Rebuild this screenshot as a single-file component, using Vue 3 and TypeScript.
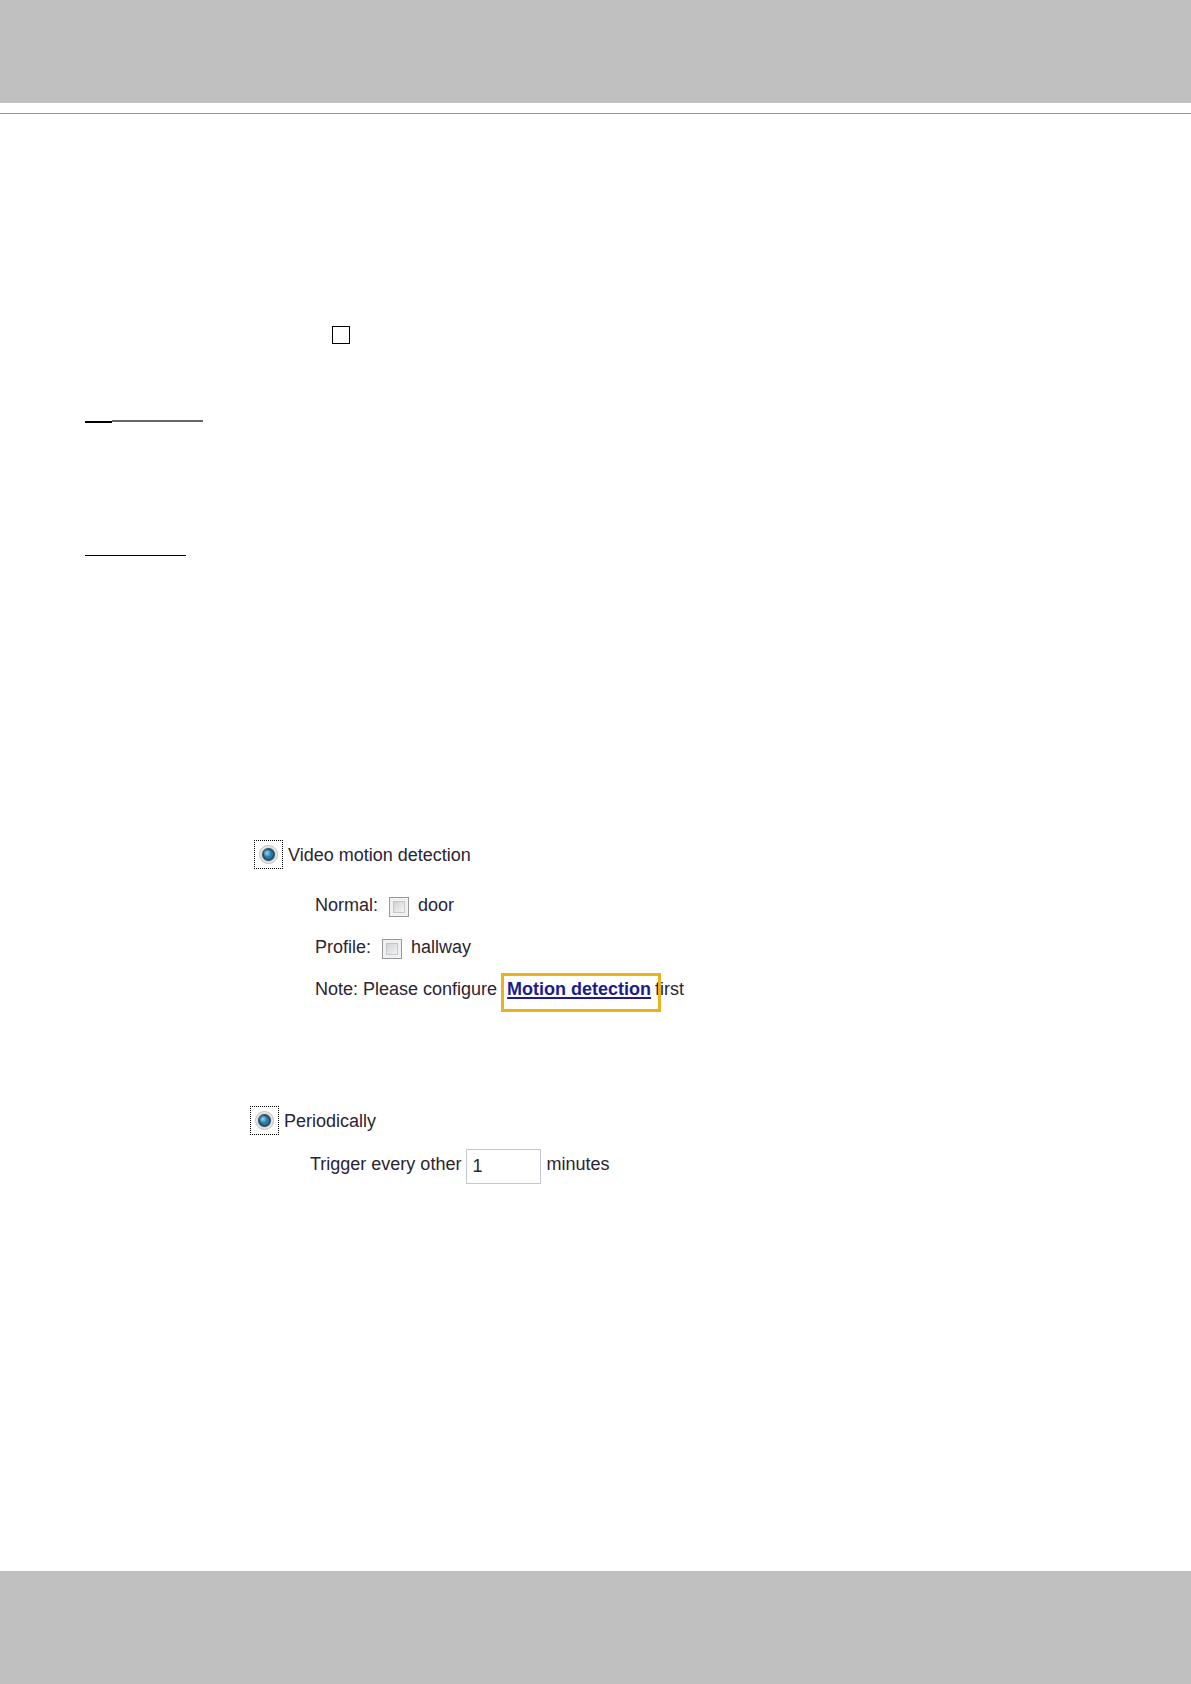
<script setup lang="ts">
import { ref } from 'vue'

interface MotionWindow {
  id: string
  kind: string
  name: string
}

const windows: MotionWindow[] = [
  { id: 'win-door', kind: 'Normal:', name: 'door' },
  { id: 'win-hallway', kind: 'Profile:', name: 'hallway' },
]
const selected = ref<string[]>([])
const motionTrigger = ref('motion')
const periodicTrigger = ref('periodic')
const interval = ref('1')
</script>

<template>
  <div class="page">
    <header class="band top"></header>
    <div class="rule"></div>
    <main class="body">
      <div class="square"></div>
      <div class="underline first"><span class="dark"></span><span class="soft"></span></div>
      <div class="underline second"></div>

      <section class="trigger motion">
        <div class="head">
          <span class="focus"><input id="motion" v-model="motionTrigger" type="radio" name="motion" value="motion" class="radio" /></span>
          <label for="motion">Video motion detection</label>
        </div>
        <div class="rows">
          <div v-for="w in windows" :key="w.id" class="row">
            <span>{{ w.kind }}</span>
            <input :id="w.id" v-model="selected" type="checkbox" :value="w.id" class="check" />
            <label :for="w.id">{{ w.name }}</label>
          </div>
          <div class="row">
            <span>Note: Please configure</span>
            <span class="marked"><a href="#motion">Motion detection</a></span>
            <span>first</span>
          </div>
        </div>
      </section>

      <section class="trigger periodic">
        <div class="head">
          <span class="focus"><input id="periodic" v-model="periodicTrigger" type="radio" name="periodic" value="periodic" class="radio" /></span>
          <label for="periodic">Periodically</label>
        </div>
        <div class="row every">
          <label for="interval">Trigger every other</label>
          <input id="interval" v-model="interval" type="text" class="minutes" />
          <span>minutes</span>
        </div>
      </section>
    </main>
    <footer class="band bottom"></footer>
  </div>
</template>

<style>
body {
  background: #fff;
}
</style>

<style scoped>
.page {
  display: flex;
  flex-direction: column;
  min-height: 100vh;
  color: #2b2433;
  font: 18px/42px "Liberation Sans", Arial, sans-serif;
}
.band {
  background: #c0c0c0;
}
.top {
  height: 103px;
}
.bottom {
  height: 113px;
}
.rule {
  height: 1px;
  margin-top: 10px;
  background: #999;
}
.body {
  flex: 1;
  padding: 212px 85px 0;
}
.square {
  box-sizing: border-box;
  width: 18px;
  height: 18px;
  margin-left: 247px;
  border: 1px solid #000;
}
.underline {
  display: flex;
}
.first {
  align-items: flex-start;
  height: 3px;
  margin-top: 76px;
}
.dark {
  align-self: flex-end;
  width: 27px;
  height: 2px;
  background: #000;
}
.soft {
  width: 91px;
  height: 2px;
  background: #666;
}
.second {
  width: 101px;
  height: 1px;
  margin-top: 132px;
  background: #000;
}
.trigger {
  white-space: nowrap;
}
.motion {
  margin: 284px 0 0 169px;
}
.periodic {
  margin: 96px 0 0 165px;
}
.head {
  display: flex;
  align-items: center;
  gap: 5px;
  height: 29px;
}
.focus {
  display: flex;
  align-items: center;
  justify-content: center;
  box-sizing: border-box;
  width: 29px;
  height: 29px;
  border: 1px dotted #000;
}
.radio {
  appearance: none;
  box-sizing: border-box;
  width: 19px;
  height: 19px;
  margin: 0;
  border: 1px solid #bdbdbd;
  border-radius: 50%;
  background: #e4e4e4;
}
.radio:checked {
  background:
    radial-gradient(circle at 7px 7px, #8fd6f2 0, rgba(60, 160, 210, 0) 4px),
    radial-gradient(circle at center, #2f86ba 0, #2576a8 4px, #2f4a60 5px, #3f5566 6px, #dcdcdc 7px, #ececec 8px);
}
.rows {
  margin: 15px 0 0 61px;
}
.row {
  display: flex;
  align-items: center;
  height: 42px;
}
.check {
  appearance: none;
  box-sizing: border-box;
  width: 20px;
  height: 20px;
  margin: 4px 9px 0 11px;
  border: 1px solid #989898;
  outline: 1px solid #c4c8ca;
  outline-offset: -5px;
  background: linear-gradient(135deg, #ccd0d3, #f6f6f6) center / 12px 12px no-repeat #f1f1f1;
}
.check:checked {
  background: #4a7fa5;
}
.marked {
  position: relative;
  margin: 0 4px 0 10px;
}
.marked::after {
  content: "";
  position: absolute;
  inset: 5px -10px -2px -6px;
  border: 3px solid #e8b31c;
  pointer-events: none;
}
a {
  color: #1c1c8f;
  font-weight: bold;
  text-decoration: underline;
  text-decoration-thickness: 2px;
  text-underline-offset: 2px;
}
.every {
  margin: 8px 0 0 60px;
}
.minutes {
  box-sizing: border-box;
  width: 75px;
  height: 35px;
  margin: 4px 5px 0;
  padding: 0 5px;
  border: 1px solid #c3c8ce;
  background: #fff;
  color: inherit;
  font: inherit;
  line-height: 32px;
}
</style>
